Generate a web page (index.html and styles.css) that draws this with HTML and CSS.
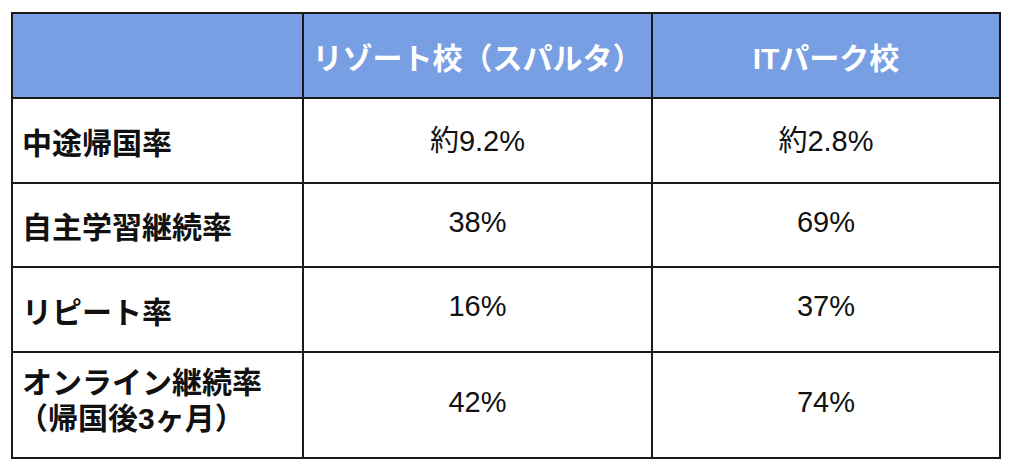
FILE: index.html
```html
<!DOCTYPE html>
<html lang="ja">
<head>
<meta charset="utf-8">
<link rel="stylesheet" href="styles.css">
</head>
<body>
<div class="table">
  <div class="cell head"></div>
  <div class="cell head center">リゾート校（スパルタ）</div>
  <div class="cell head center">ITパーク校</div>

  <div class="cell label r1">中途帰国率</div>
  <div class="cell value r1">約9.2%</div>
  <div class="cell value r1">約2.8%</div>

  <div class="cell label r2">自主学習継続率</div>
  <div class="cell value r2">38%</div>
  <div class="cell value r2">69%</div>

  <div class="cell label r3">リピート率</div>
  <div class="cell value r3">16%</div>
  <div class="cell value r3">37%</div>

  <div class="cell label r4 two">オンライン継続率<br><span class="paren">（帰国後3ヶ月）</span></div>
  <div class="cell value r4">42%</div>
  <div class="cell value r4">74%</div>
</div>
</body>
</html>
```

FILE: styles.css
```css
html, body {
  margin: 0;
  padding: 0;
  background: #ffffff;
}

body {
  padding: 12px 0 0 11px;
  font-family: "Liberation Sans", "Noto Sans CJK JP", sans-serif;
  color: #111;
}

.table {
  width: 990px;
  box-sizing: border-box;
  display: grid;
  grid-template-columns: 289px 347px 346px;
  grid-template-rows: 83px 83px 82px 83px 104px;
  gap: 2px;
  padding: 2px;
  background: #1a1a1a;
}

.cell {
  background: #fff;
  display: flex;
  align-items: center;
  font-size: 30px;
}

.head {
  background: #789ee3;
  color: #fff;
  font-weight: bold;
  font-size: 30px;
}

.center {
  justify-content: center;
}

.label {
  font-weight: bold;
  padding-left: 9px;
  padding-top: 0;
}

.value {
  justify-content: center;
  font-size: 29px;
  padding-bottom: 6px;
}

.two {
  display: block;
  padding-top: 12px;
  line-height: 36px;
  box-sizing: border-box;
}

.paren {
  margin-left: -4px;
}
```
